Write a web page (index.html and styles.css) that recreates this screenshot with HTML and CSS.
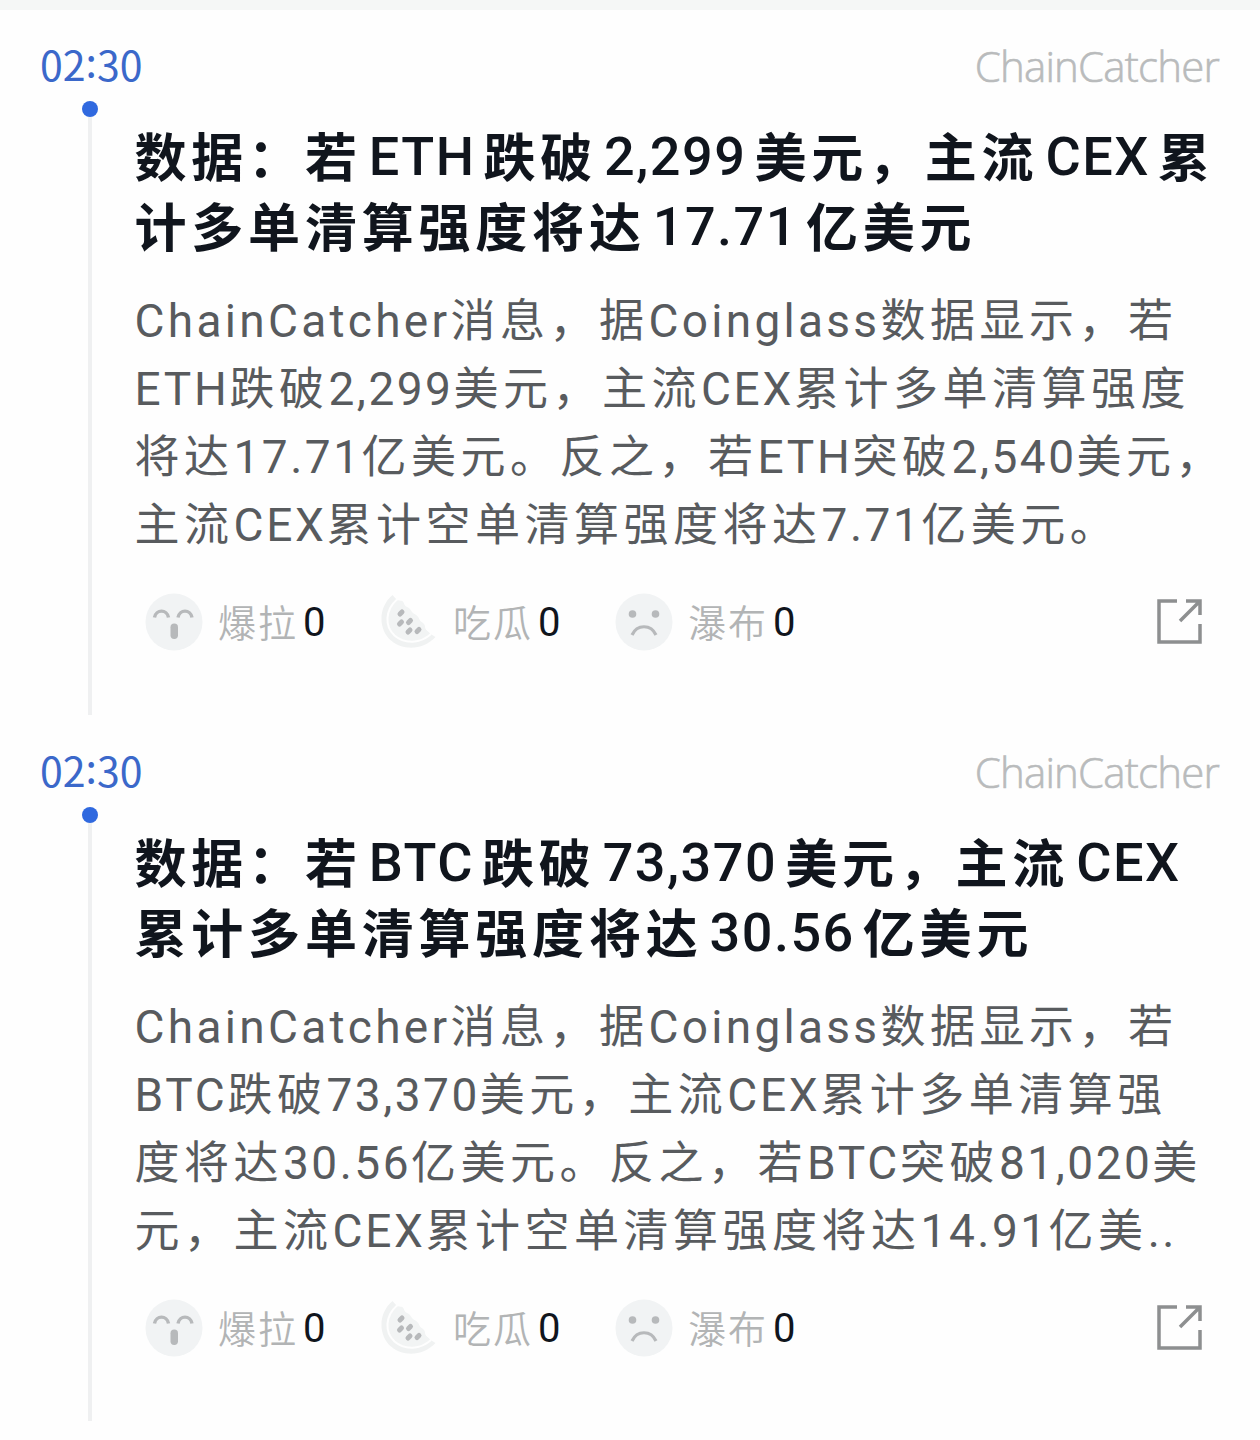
FILE: index.html
```html
<!DOCTYPE html>
<html lang="zh-CN">
<head>
  <meta charset="UTF-8">
  <meta name="viewport" content="width=device-width, initial-scale=1">
  <title>快讯</title>
  <link rel="stylesheet" href="styles.css">
</head>
<body>
  <!-- 图标 -->
  <svg class="sprite" width="0" height="0">
    <symbol id="icon-up" viewBox="0 0 58 58">
      <circle cx="29" cy="29" r="28.5" fill="#f1f3f4"/>
      <path d="M9.500 24.500c1.500-8.500 12.500-8.500 14 0M33 24.500c1.500-8.500 12.500-8.500 14 0" fill="none" stroke="#b7b9bb" stroke-width="3.400"/>
      <rect x="25.500" y="30.500" width="7.500" height="15.500" rx="3.700" fill="#b7b9bb"/>
    </symbol>
    <symbol id="icon-melon" viewBox="0 0 58 58">
      <path d="M12.500 2C-2 14-2 36 11 47.500c13 11 33 9 44.500-3.500L49 40 17 7z" fill="#f0f2f2"/>
      <path d="M18 7C6 17 5 33 15 42c10 8.500 25 7.500 35-1.500-2-3-5-3-5-7s-5-4-6-8-6-4-8-8-6-3-7-7-4-2-6-3.500z" fill="#f2f4f4"/>
      <path d="M17 6.500C5 17 4.500 33.500 14.500 42.500c10.500 9 26 8 36.500-1.500" fill="none" stroke="#fefefe" stroke-width="2"/>
      <g stroke="#b7b9bb" stroke-width="5" stroke-linecap="round">
        <path d="M20 21l2-2M19.500 31l2-2M28.500 29.500l2-2M28 39l2-2M37 38.500l2-2"/>
      </g>
    </symbol>
    <symbol id="icon-down" viewBox="0 0 58 58">
      <circle cx="29" cy="29" r="28.500" fill="#f1f3f4"/>
      <circle cx="17.500" cy="21" r="3.800" fill="#b7b9bb"/>
      <circle cx="40.500" cy="21" r="3.800" fill="#b7b9bb"/>
      <path d="M17 42c5-11 19-11 24 0" fill="none" stroke="#b7b9bb" stroke-width="3.200"/>
    </symbol>
    <symbol id="icon-share" viewBox="0 0 46 46">
      <path d="M20 2H2v41h41V25M29 2h14v14M43 2L23 22" fill="none" stroke="#8d8f90" stroke-width="3.500"/>
    </symbol>
  </svg>

  <div class="feed">
    <article class="news">
      <header class="news-header">
        <time class="time">02<span class="colon">:</span>30</time>
        <span class="source">ChainCatcher</span>
      </header>
      <div class="news-body">
        <h2 class="title">
          <span class="line">数据：若<b>ETH</b>跌破<b>2,299</b>美元，主流<b>CEX</b>累</span>
          <span class="line">计多单清算强度将达<b>17.71</b>亿美元</span>
        </h2>
        <p class="text">
          <span class="line"><i class="word">ChainCatcher</i>消息，据<i class="word">Coinglass</i>数据显示，若</span>
          <span class="line"><i>ETH</i>跌破<i class="num">2,299</i>美元，主流<i>CEX</i>累计多单清算强度</span>
          <span class="line">将达<i class="num">17.71</i>亿美元。反之，若<i>ETH</i>突破<i class="num">2,540</i>美元，</span>
          <span class="line">主流<i>CEX</i>累计空单清算强度将达<i class="num">7.71</i>亿美元。</span>
        </p>
        <div class="actions">
          <div class="vote"><svg class="face"><use href="#icon-up"/></svg><span class="label">爆拉</span><span class="count">0</span></div>
          <div class="vote"><svg class="face"><use href="#icon-melon"/></svg><span class="label">吃瓜</span><span class="count">0</span></div>
          <div class="vote"><svg class="face"><use href="#icon-down"/></svg><span class="label">瀑布</span><span class="count">0</span></div>
          <svg class="share"><use href="#icon-share"/></svg>
        </div>
      </div>
    </article>

    <article class="news">
      <header class="news-header">
        <time class="time">02<span class="colon">:</span>30</time>
        <span class="source">ChainCatcher</span>
      </header>
      <div class="news-body">
        <h2 class="title">
          <span class="line">数据：若<b>BTC</b>跌破<b>73,370</b>美元，主流<b>CEX</b></span>
          <span class="line">累计多单清算强度将达<b>30.56</b>亿美元</span>
        </h2>
        <p class="text">
          <span class="line"><i class="word">ChainCatcher</i>消息，据<i class="word">Coinglass</i>数据显示，若</span>
          <span class="line"><i>BTC</i>跌破<i class="num">73,370</i>美元，主流<i>CEX</i>累计多单清算强</span>
          <span class="line">度将达<i class="num">30.56</i>亿美元。反之，若<i>BTC</i>突破<i class="num">81,020</i>美</span>
          <span class="line">元，主流<i>CEX</i>累计空单清算强度将达<i class="num">14.91</i>亿美<i class="num">..</i></span>
        </p>
        <div class="actions">
          <div class="vote"><svg class="face"><use href="#icon-up"/></svg><span class="label">爆拉</span><span class="count">0</span></div>
          <div class="vote"><svg class="face"><use href="#icon-melon"/></svg><span class="label">吃瓜</span><span class="count">0</span></div>
          <div class="vote"><svg class="face"><use href="#icon-down"/></svg><span class="label">瀑布</span><span class="count">0</span></div>
          <svg class="share"><use href="#icon-share"/></svg>
        </div>
      </div>
    </article>
  </div>
</body>
</html>
```
FILE: styles.css
```css
* {
  box-sizing: border-box;
  margin: 0;
  padding: 0;
}
body {
  font-family: "Noto Sans CJK SC", sans-serif;
  background: #fefefe;
}
.sprite {
  display: block;
}
.feed {
  border-top: 10px solid #f5f7f6;
}
.news {
  height: 706px;
  display: flex;
  flex-direction: column;
}
.news-header {
  height: 98px;
  padding: 26px 41px 0 40px;
  display: flex;
  justify-content: space-between;
  line-height: 60px;
}
.time {
  font-size: 41px;
  line-height: 54px;
  color: #3b68ca;
}
.colon {
  line-height: 1;
  vertical-align: 4px;
}
.source {
  font-family: "Open Sans", sans-serif;
  font-size: 42px;
  font-weight: 300;
  letter-spacing: -0.8px;
  -webkit-text-stroke: 0.6px #b9bbbc;
  color: #b9bbbc;
}
.news-body {
  position: relative;
  height: 607px;
  margin-left: 88px;
  padding: 12px 57px 0 42.500px;
  border-left: 4px solid #eff0f1;
}
/* 时间轴圆点 */
.news-body::before {
  content: "";
  position: absolute;
  left: -10px;
  top: -7px;
  width: 16px;
  height: 16px;
  border-radius: 50%;
  background: #3069df;
}
.line {
  display: block;
  white-space: nowrap;
}
.title {
  height: 140px;
  font-size: 52px;
  font-weight: 700;
  line-height: 70px;
  letter-spacing: 4.8px;
  color: #10151d;
}
.title b {
  font-family: Roboto, sans-serif;
  font-size: 54px;
  font-weight: 500;
  line-height: 1;
  letter-spacing: 1.5px;
  margin: 0 8px 0 7px;
  vertical-align: 2px;
}
.text {
  height: 272px;
  margin-top: 24px;
  font-size: 45px;
  line-height: 68px;
  letter-spacing: 4.5px;
  color: #585b5e;
}
.text i {
  font-family: Roboto, sans-serif;
  font-size: 46px;
  font-style: normal;
  line-height: 1;
  letter-spacing: 2.7px;
}
.text .word {
  letter-spacing: 3.3px;
}
.text .num {
  letter-spacing: 2.500px;
}
.actions {
  display: flex;
  align-items: center;
  height: 58px;
  margin: 37px 0 0 10.500px;
}
.vote {
  display: flex;
  align-items: center;
  width: 235px;
}
.face {
  width: 58px;
  height: 58px;
  margin-right: 15px;
}
.label {
  font-size: 38px;
  font-weight: 350;
  line-height: 50px;
  letter-spacing: 2px;
  margin-bottom: 2px;
  color: #b2b4b5;
}
.count {
  margin: 1px 0 0 5px;
  font-family: Roboto, sans-serif;
  font-size: 40px;
  color: #10151d;
}
.share {
  width: 46px;
  height: 46px;
  margin-left: auto;
}
```
